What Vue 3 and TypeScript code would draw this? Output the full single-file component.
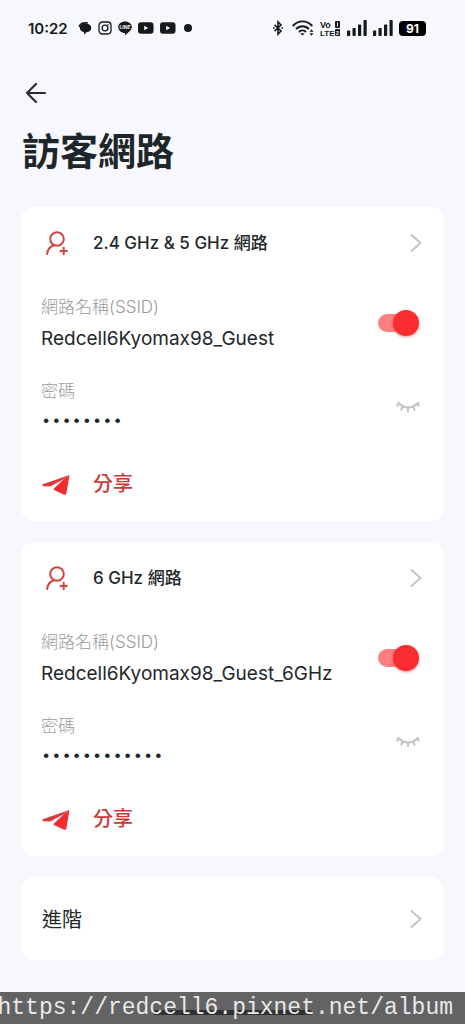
<script setup lang="ts">
import { ref } from 'vue'

interface Network {
  id: string
  title: string
  ssid: string
  password: string
  enabled: boolean
}

const networks = ref<Network[]>([
  { id: 'dual', title: '2.4 GHz & 5 GHz 網路', ssid: 'Redcell6Kyomax98_Guest', password: '00000000', enabled: true },
  { id: 'six', title: '6 GHz 網路', ssid: 'Redcell6Kyomax98_Guest_6GHz', password: '000000000000', enabled: true },
])
</script>

<template>
  <div class="page">
    <div class="status">
      <div class="status-left">
        <span class="time">10:22</span>
        <svg class="ic14" viewBox="0 0 14 14" aria-hidden="true">
          <path d="M1.500 5.200C2.600 2.400 5.500 1.500 9 1.900" fill="none" stroke="#15191a" stroke-width="1.800" stroke-linecap="round" />
          <path d="M7.500 2.600c3.300 0 5.700 1.700 5.700 4.300 0 2.400-1.900 4-4.700 4.300L6.200 13.700 6 11.200C3.500 10.600 1.900 9.200 1.900 7c0-2.600 2.400-4.400 5.600-4.400z" fill="#15191a" />
        </svg>
        <svg class="ic14" viewBox="0 0 14 14" fill="none" stroke="#15191a" aria-hidden="true">
          <rect x="1" y="1" width="12" height="12" rx="3.400" stroke-width="1.300" />
          <circle cx="7" cy="7" r="2.900" stroke-width="1.400" />
          <circle cx="10.300" cy="3.700" r=".5" stroke-width=".7" />
        </svg>
        <svg class="ic14" viewBox="0 0 14 14" aria-hidden="true">
          <path d="M7 .5c3.800 0 6.800 2.400 6.800 5.500 0 3-3.400 5.400-6.300 8-.6.300-.7 0-.5-1.900C3.200 11.900.2 9.300.2 6 .2 2.900 3.200.5 7 .5z" fill="#15191a" />
          <text x="7" y="7.800" text-anchor="middle" class="line-word">LINE</text>
        </svg>
        <svg v-for="n in 2" :key="n" class="ic16" viewBox="0 0 16 14" aria-hidden="true">
          <rect x="0" y="1.200" width="15.500" height="11.600" rx="3" fill="#15191a" />
          <path d="M6.200 4.800v4.400L10.100 7z" fill="#f7f8fd" />
        </svg>
        <span class="more-dot"></span>
      </div>
      <div class="status-right">
        <svg class="bt" viewBox="0 0 10 16" fill="none" stroke="#15191a" stroke-width="1.600" aria-hidden="true">
          <path d="M1.500 4.800 8 11 5 14V2l3 3-6.500 6.200" />
          <path d="M0 8h1.600M8.400 8H10" />
        </svg>
        <svg class="wifi" viewBox="0 0 22 16" fill="none" stroke="#15191a" stroke-width="1.900" aria-hidden="true">
          <path d="M.7 6C6.400-.2 14.600-.2 20.300 6" />
          <path d="M4 9.200c3.800-4 9.200-4 13 0" />
          <path d="M7 12c2-2.200 5-2.200 7 0" />
          <path d="M8.300 13.200h4.400l-2.200 2.400z" fill="#15191a" stroke="none" />
          <path d="M17.500 11.800 19.500 9.300l2 2.500zM17.500 13.200l2 2.500 2-2.500z" fill="#15191a" stroke="none" />
        </svg>
        <svg class="volte" viewBox="0 0 21 17" aria-hidden="true">
          <text x="0" y="8" class="vo">Vo</text>
          <text x="0" y="16" class="lte">LTE</text>
          <rect x="15" y="1" width="5" height="7" rx="1" fill="#15191a" />
          <rect x="17" y="2.500" width="1" height="4" fill="#f7f8fd" />
          <rect x="15" y="9" width="5" height="7" rx="1" fill="#15191a" />
          <text x="17.500" y="14.800" text-anchor="middle" class="sim">2</text>
        </svg>
        <svg v-for="n in 2" :key="n" class="signal" viewBox="0 0 20 16" fill="#15191a" aria-hidden="true">
          <rect x="0" y="10.500" width="3.200" height="5.500" rx=".7" />
          <rect x="5.500" y="8" width="3.200" height="8" rx=".7" />
          <rect x="11" y="4.500" width="3.200" height="11.500" rx=".7" />
          <rect x="16.500" y="0" width="3.200" height="16" rx=".7" />
        </svg>
        <span class="battery">91</span>
      </div>
    </div>

    <header>
      <button class="back" type="button" aria-label="返回">
        <svg viewBox="0 0 22 22" fill="none" stroke="#2a2c2e" stroke-width="2.200" stroke-linecap="round" stroke-linejoin="round">
          <path d="M11 2 2 11l9 9M2.500 11H20" />
        </svg>
      </button>
      <h1>訪客網路</h1>
    </header>

    <main>
      <section v-for="net in networks" :key="net.id" class="card">
        <button class="card-head" type="button">
          <svg class="user" viewBox="0 0 24 26" fill="none" stroke="#cf4542" stroke-width="2" stroke-linecap="round" aria-hidden="true">
            <circle cx="12" cy="9" r="6.800" />
            <path d="M2.200 24c.3-4.300 2.600-7.300 6.600-8.700M18.700 17.800v6.400M15.500 21h6.400" />
          </svg>
          <span class="card-title">{{ net.title }}</span>
          <svg class="chevron" viewBox="0 0 12 20" fill="none" stroke="#c4c4c4" stroke-width="1.900" stroke-linecap="round" stroke-linejoin="round" aria-hidden="true">
            <path d="M1.500 2 10.500 10l-9 8" />
          </svg>
        </button>

        <div class="row">
          <div class="field">
            <span class="label">網路名稱(SSID)</span>
            <span class="value">{{ net.ssid }}</span>
          </div>
          <input v-model="net.enabled" class="toggle" type="checkbox" role="switch" :aria-label="net.title" />
        </div>

        <div class="row">
          <div class="field">
            <label class="label" :for="'pw-' + net.id">密碼</label>
            <input :id="'pw-' + net.id" class="password" type="password" readonly :value="net.password" />
          </div>
          <button class="eye" type="button" aria-label="顯示密碼">
            <svg viewBox="0 0 24 12" fill="none" stroke="#c4c4c4" stroke-width="2.200" stroke-linecap="round">
              <path d="M2.300 2Q12 11 22 2M3 3 1.400 4.500M6.500 5.300 5.400 8.600M12 6.500v3.600M17.300 5.500 18.300 8.600M20.900 3l1.700 1.500" />
            </svg>
          </button>
        </div>

        <button class="share" type="button">
          <svg viewBox="0 0 28 20" aria-hidden="true">
            <path d="M27.500.1.800 9.200C-.4 9.800.1 10.600 1.900 11.200L8.200 11.400 22 4z" fill="#d63c3c" />
            <path d="M27.500.1 22 4 12 13.400c-.7.700-.6 1.300.1 1.700l9.500 4.400c1.500.5 2.500.2 2.800-1.200z" fill="#f22c2f" />
          </svg>
          <span>分享</span>
        </button>
      </section>

      <button class="card advanced" type="button">
        <span>進階</span>
        <svg class="chevron" viewBox="0 0 12 20" fill="none" stroke="#c4c4c4" stroke-width="1.900" stroke-linecap="round" stroke-linejoin="round" aria-hidden="true">
          <path d="M1.500 2 10.500 10l-9 8" />
        </svg>
      </button>
    </main>

    <footer class="watermark">
      <span class="home-bar"></span>
      <span class="url">https://redcell6.pixnet.net/album</span>
    </footer>
  </div>
</template>

<style>
body {
  background: #f7f8fd;
}
</style>

<style scoped>
.page {
  min-height: 100vh;
  box-sizing: border-box;
  padding-bottom: 64px;
  background: #f7f8fd;
  color: #22272a;
  font-family: Inter, "Noto Sans CJK TC", sans-serif;
  overflow-x: hidden;
}
button {
  border: 0;
  padding: 0;
  background: none;
  color: inherit;
  font: inherit;
  text-align: left;
  cursor: pointer;
}
svg {
  display: block;
  flex: none;
}
.status {
  display: flex;
  justify-content: space-between;
  align-items: center;
  height: 56px;
  padding: 0 39px 0 28px;
}
.status-left,
.status-right {
  display: flex;
  align-items: center;
  gap: 6px;
}
.status-left {
  gap: 6px;
}
.time {
  margin-right: 4px;
  font-size: 15px;
  font-weight: 600;
  color: #15191a;
}
.ic14 {
  width: 14px;
  height: 14px;
}
.ic16 {
  width: 16px;
  height: 14px;
}
.line-word {
  font: 700 5px Inter, sans-serif;
  fill: #f7f8fd;
}
.more-dot {
  width: 8px;
  height: 8px;
  margin-left: 2px;
  border-radius: 50%;
  background: #15191a;
}
.bt {
  width: 10px;
  height: 16px;
  margin-right: 3px;
}
.wifi {
  width: 22px;
  height: 16px;
}
.volte {
  width: 21px;
  height: 17px;
}
.vo,
.lte {
  font: 700 9px "Liberation Sans", sans-serif;
  fill: #15191a;
}
.lte {
  font-size: 8px;
}
.sim {
  font: 700 6px "Liberation Sans", sans-serif;
  fill: #f7f8fd;
}
.signal {
  width: 20px;
  height: 16px;
}
.battery {
  width: 27px;
  height: 15px;
  border-radius: 4px;
  background: #000;
  color: #fff;
  font-size: 12px;
  font-weight: 700;
  line-height: 15px;
  text-align: center;
}
header {
  padding: 13px 22px 0;
}
.back {
  display: flex;
  align-items: center;
  width: 48px;
  height: 48px;
  padding-left: 3px;
}
.back svg {
  width: 22px;
  height: 22px;
}
h1 {
  margin: 6px 0 28px;
  font-size: 38px;
  line-height: 56px;
  font-weight: 700;
  color: #1d2628;
}
main {
  display: flex;
  flex-direction: column;
  gap: 21px;
  padding: 0 21px;
}
.card {
  box-sizing: border-box;
  padding: 0 21px 12px 20px;
  border-radius: 13px;
  background: #fff;
}
.card-head {
  display: flex;
  align-items: center;
  width: 100%;
  height: 72px;
  margin-bottom: 12px;
  padding: 0 1px 0 4px;
}
.user {
  width: 24px;
  height: 26px;
}
.card-title {
  flex: 1;
  margin-left: 24px;
  font-size: 17px;
  line-height: 24px;
  font-weight: 500;
}
.chevron {
  width: 12px;
  height: 20px;
}
.row {
  display: flex;
  align-items: center;
  justify-content: space-between;
  height: 64px;
  margin-bottom: 20px;
}
.field {
  display: flex;
  flex: 1;
  flex-direction: column;
  min-width: 0;
}
.label {
  font-size: 17px;
  font-weight: 300;
  line-height: 32px;
  color: #9b9b9b;
}
.value {
  font-size: 19px;
  line-height: 32px;
  white-space: nowrap;
}
.password {
  width: 100%;
  height: 28px;
  margin-bottom: 4px;
  box-sizing: border-box;
  padding: 0;
  border: 0;
  outline: 0;
  background: none;
  color: #22272a;
  font: 17px "Liberation Mono", monospace;
}
.toggle {
  appearance: none;
  display: flex;
  align-items: center;
  justify-content: flex-end;
  width: 39px;
  height: 18px;
  margin: 0 6px 0 0;
  border-radius: 9px;
  background: #ff7f81;
  cursor: pointer;
}
.toggle::before {
  content: "";
  width: 26px;
  height: 26px;
  flex: none;
  margin-right: -2px;
  border-radius: 50%;
  background: #f92d2f;
  box-shadow: 0 1px 3px rgba(200, 40, 40, 0.5);
}
.toggle:not(:checked) {
  justify-content: flex-start;
  background: #ccc;
}
.eye {
  padding: 6px 3px 6px 6px;
}
.eye svg {
  width: 24px;
  height: 12px;
}
.share {
  display: flex;
  align-items: center;
  gap: 23px;
  height: 48px;
  margin-top: 22px;
  padding-left: 1px;
  color: #cc3a38;
  font-size: 20px;
  line-height: 24px;
  font-weight: 500;
}
.share span {
  padding-bottom: 2px;
}
.share svg {
  width: 28px;
  height: 20px;
}
.advanced {
  display: flex;
  align-items: center;
  justify-content: space-between;
  width: 100%;
  height: 83px;
  padding: 0 22px 0 21px;
  font-size: 20px;
}
.watermark {
  position: fixed;
  right: 0;
  bottom: 0;
  left: 0;
  display: flex;
  justify-content: center;
  height: 32px;
  background: #636365;
  overflow: hidden;
}
.home-bar {
  position: absolute;
  bottom: 9px;
  left: 33%;
  right: 33%;
  height: 5px;
  border-radius: 3px;
  background: #303030;
}
.url {
  position: absolute;
  right: 12px;
  color: #e8e8e8;
  font-family: "Liberation Mono", monospace;
  font-size: 23px;
  line-height: 32px;
  white-space: nowrap;
}
</style>
